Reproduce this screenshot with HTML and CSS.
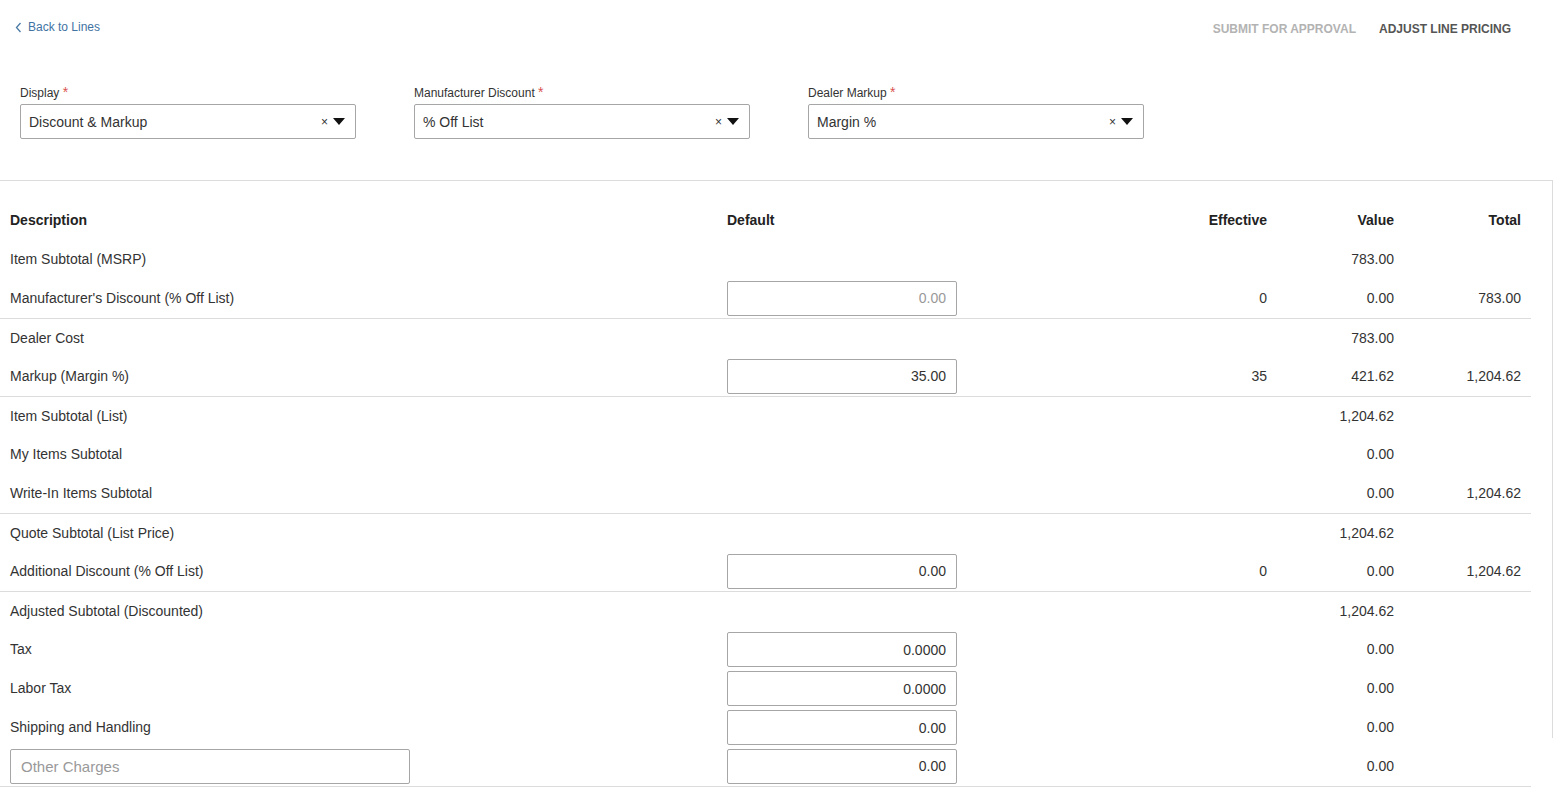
FILE: index.html
```html
<!DOCTYPE html>
<html lang="en">
<head>
  <meta charset="UTF-8" />
  <title>Adjust Line Pricing</title>
  <link rel="stylesheet" href="styles.css">
</head>
<body>

  <div class="topbar">
    <a class="back-link" href="#">
      <svg width="7" height="11" viewBox="0 0 7 11"><path d="M5.5 1 L1.5 5.5 L5.5 10" fill="none" stroke="#4a7aa6" stroke-width="1.3"/></svg>
      Back to Lines
    </a>
    <div class="actions">
      <span class="action disabled">Submit for Approval</span>
      <span class="action">Adjust Line Pricing</span>
    </div>
  </div>

  <div class="filters">
    <div class="field">
      <label>Display <span class="req">*</span></label>
      <div class="select">
        <span class="select-value">Discount &amp; Markup</span>
        <span class="clear">&times;</span>
        <span class="caret"></span>
      </div>
    </div>
    <div class="field">
      <label>Manufacturer Discount <span class="req">*</span></label>
      <div class="select">
        <span class="select-value">% Off List</span>
        <span class="clear">&times;</span>
        <span class="caret"></span>
      </div>
    </div>
    <div class="field">
      <label>Dealer Markup <span class="req">*</span></label>
      <div class="select">
        <span class="select-value">Margin %</span>
        <span class="clear">&times;</span>
        <span class="caret"></span>
      </div>
    </div>
  </div>

  <div class="panel">
    <table class="pricing">
      <colgroup>
        <col class="c-desc">
        <col class="c-default">
        <col class="c-num">
        <col class="c-num">
        <col class="c-num">
      </colgroup>
      <thead>
        <tr>
          <th>Description</th>
          <th>Default</th>
          <th class="num">Effective</th>
          <th class="num">Value</th>
          <th class="num">Total</th>
        </tr>
      </thead>
      <tbody>
        <tr>
          <td>Item Subtotal (MSRP)</td><td></td><td></td><td class="num">783.00</td><td></td>
        </tr>
        <tr class="group-end">
          <td>Manufacturer's Discount (% Off List)</td>
          <td><input class="amount" type="text" placeholder="0.00"></td>
          <td class="num">0</td><td class="num">0.00</td><td class="num">783.00</td>
        </tr>
        <tr class="lead">
          <td>Dealer Cost</td><td></td><td></td><td class="num">783.00</td><td></td>
        </tr>
        <tr class="group-end">
          <td>Markup (Margin %)</td>
          <td><input class="amount" type="text" value="35.00"></td>
          <td class="num">35</td><td class="num">421.62</td><td class="num">1,204.62</td>
        </tr>
        <tr class="lead">
          <td>Item Subtotal (List)</td><td></td><td></td><td class="num">1,204.62</td><td></td>
        </tr>
        <tr>
          <td>My Items Subtotal</td><td></td><td></td><td class="num">0.00</td><td></td>
        </tr>
        <tr class="group-end">
          <td>Write-In Items Subtotal</td><td></td><td></td><td class="num">0.00</td><td class="num">1,204.62</td>
        </tr>
        <tr class="lead">
          <td>Quote Subtotal (List Price)</td><td></td><td></td><td class="num">1,204.62</td><td></td>
        </tr>
        <tr class="group-end">
          <td>Additional Discount (% Off List)</td>
          <td><input class="amount" type="text" value="0.00"></td>
          <td class="num">0</td><td class="num">0.00</td><td class="num">1,204.62</td>
        </tr>
        <tr class="lead">
          <td>Adjusted Subtotal (Discounted)</td><td></td><td></td><td class="num">1,204.62</td><td></td>
        </tr>
        <tr>
          <td>Tax</td>
          <td><input class="amount" type="text" value="0.0000"></td>
          <td></td><td class="num">0.00</td><td></td>
        </tr>
        <tr>
          <td>Labor Tax</td>
          <td><input class="amount" type="text" value="0.0000"></td>
          <td></td><td class="num">0.00</td><td></td>
        </tr>
        <tr>
          <td>Shipping and Handling</td>
          <td><input class="amount" type="text" value="0.00"></td>
          <td></td><td class="num">0.00</td><td></td>
        </tr>
        <tr class="group-end">
          <td><input class="charges" type="text" placeholder="Other Charges"></td>
          <td><input class="amount" type="text" value="0.00"></td>
          <td></td><td class="num">0.00</td><td></td>
        </tr>
      </tbody>
    </table>
  </div>

</body>
</html>
```

FILE: styles.css
```css
body {
  margin: 0;
  background: #fff;
  color: #333;
  font-family: "Liberation Sans", Arial, sans-serif;
  font-size: 14px;
}

.topbar {
  display: flex;
  justify-content: space-between;
  align-items: flex-start;
  height: 37px;
  padding: 19px 42px 0 15px;
}

.back-link {
  display: flex;
  align-items: center;
  gap: 6px;
  color: #3f73a3;
  font-size: 12px;
  line-height: 16px;
  text-decoration: none;
}

.actions {
  display: flex;
  gap: 23px;
  padding-top: 3px;
}

.action {
  font-size: 12px;
  line-height: 14px;
  font-weight: bold;
  text-transform: uppercase;
  color: #555;
}

.action.disabled {
  color: #b3b3b3;
}

.filters {
  display: flex;
  gap: 58px;
  padding: 29px 20px 41px;
}

.field {
  width: 336px;
}

.field label {
  display: block;
  font-size: 12px;
  line-height: 14px;
  color: #333;
  margin-bottom: 4px;
}

.req {
  color: #d9534f;
  font-size: 14px;
}

.select {
  display: flex;
  align-items: center;
  height: 35px;
  box-sizing: border-box;
  border: 1px solid #a6a6a6;
  border-radius: 2px;
  padding: 0 10px 0 8px;
}

.select-value {
  flex: 1;
  font-size: 14px;
  color: #333;
}

.clear {
  font-size: 12px;
  color: #333;
  margin-right: 5px;
}

.caret {
  width: 0;
  height: 0;
  border-left: 6px solid transparent;
  border-right: 6px solid transparent;
  border-top: 7px solid #111;
}

.panel {
  position: relative;
  border-top: 1px solid #dcdcdc;
}

/* right edge line of the pricing panel stops short of the last rows */
.panel::after {
  content: "";
  position: absolute;
  top: 0;
  right: 0;
  width: 1px;
  height: 557px;
  background: #dcdcdc;
}

.pricing {
  width: 1531px;
  border-collapse: collapse;
  table-layout: fixed;
}

.c-desc { width: 717px; }
.c-default { width: 433px; }
.c-num { width: 127px; }

.pricing th {
  text-align: left;
  font-weight: bold;
  color: #222;
  line-height: 17px;
  padding: 31px 10px 11px;
}

.pricing td {
  height: 39px;
  padding: 0 10px;
  line-height: 17px;
  vertical-align: middle;
  box-sizing: border-box;
}

.pricing tr.lead td {
  padding-top: 2px;
}

.pricing .num {
  text-align: right;
}

.pricing tr.group-end td {
  border-bottom: 1px solid #dcdcdc;
}

.amount {
  display: block;
  width: 230px;
  height: 35px;
  box-sizing: border-box;
  border: 1px solid #a6a6a6;
  border-radius: 2px;
  padding: 0 10px;
  text-align: right;
  font-family: inherit;
  font-size: 14px;
  color: #333;
}

.amount::placeholder {
  color: #999;
}

.charges {
  display: block;
  width: 400px;
  height: 35px;
  box-sizing: border-box;
  border: 1px solid #a6a6a6;
  border-radius: 2px;
  padding: 0 10px;
  font-family: inherit;
  font-size: 15px;
  color: #333;
}

.charges::placeholder {
  color: #999;
}
```
